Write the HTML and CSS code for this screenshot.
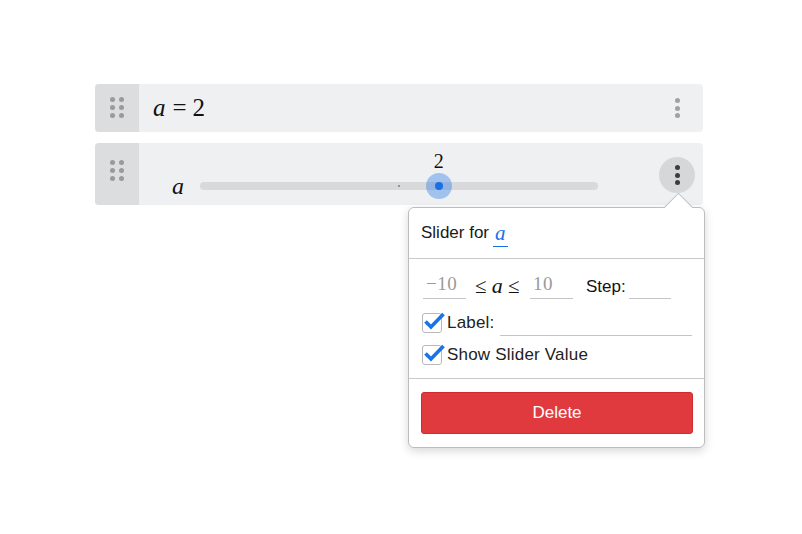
FILE: index.html
```html
<!DOCTYPE html>
<html>
<head>
<meta charset="utf-8">
<link rel="stylesheet" href="styles.css">
</head>
<body>
<div class="list">
  <div class="row row-expr">
    <div class="handle"><div class="grip"><span></span><span></span><span></span><span></span><span></span><span></span></div></div>
    <div class="expr"><span class="math"><i>a</i><span class="op">=</span>2</span></div>
    <div class="kebab"><span></span><span></span><span></span></div>
  </div>
  <div class="row row-slider">
    <div class="handle handle-top"><div class="grip"><span></span><span></span><span></span><span></span><span></span><span></span></div></div>
    <div class="slider-body">
      <i class="var">a</i>
      <div class="track">
        <span class="tick"></span>
        <span class="thumb" style="left:60%"><span class="val">2</span><span class="core"></span></span>
      </div>
    </div>
    <div class="kebab kebab-active"><span></span><span></span><span></span></div>
  </div>

  <div class="popover">
    <span class="arrow"></span>
    <div class="pop-head">Slider for <i class="blue-var">a</i></div>
    <div class="pop-body">
      <div class="range-row">
        <span class="field f-min">−10</span>
        <span class="ineq">≤ <i>a</i> ≤</span>
        <span class="field f-max">10</span>
        <span class="step-label">Step:</span>
        <span class="field f-step"></span>
      </div>
      <div class="check-row">
        <span class="checkbox"><svg viewBox="0 0 24 20" width="24" height="20"><path d="M3.5 10.5 L9 16 L21.5 3" fill="none" stroke="#1a73e8" stroke-width="3.6" stroke-linejoin="miter" stroke-linecap="butt"/></svg></span>
        <span class="check-label">Label:</span>
        <span class="field f-label"></span>
      </div>
      <div class="check-row check-row-2">
        <span class="checkbox"><svg viewBox="0 0 24 20" width="24" height="20"><path d="M3.5 10.5 L9 16 L21.5 3" fill="none" stroke="#1a73e8" stroke-width="3.6" stroke-linejoin="miter" stroke-linecap="butt"/></svg></span>
        <span class="check-label">Show Slider Value</span>
      </div>
    </div>
    <div class="pop-foot">
      <button class="delete">Delete</button>
    </div>
  </div>
</div>
</body>
</html>
```

FILE: styles.css
```css
* { box-sizing: border-box; }
html, body { margin: 0; padding: 0; background: #ffffff; }
body {
  font-family: "Liberation Sans", Arial, sans-serif;
  color: #222;
  width: 802px;
  height: 534px;
  overflow: hidden;
}

.list {
  position: relative;
  margin: 84px 0 0 95px;
  width: 608px;
}

.row {
  display: flex;
  background: #eff0f2;
  border-radius: 4px;
  overflow: visible;
}
.row-expr { height: 48px; }
.row-slider { height: 62px; margin-top: 11px; }

.handle {
  width: 44px;
  flex: 0 0 44px;
  background: #dcdddf;
  border-radius: 4px 0 0 4px;
  display: flex;
  justify-content: center;
  align-items: center;
}
.handle-top { align-items: flex-start; padding-top: 18px; }

.grip {
  display: grid;
  grid-template-columns: 5px 5px;
  grid-auto-rows: 5px;
  column-gap: 4px;
  row-gap: 3px;
  margin-top: -1px;
}
.grip span {
  width: 5px;
  height: 5px;
  border-radius: 50%;
  background: #999a9c;
}

.expr {
  flex: 1;
  display: flex;
  align-items: center;
  padding-left: 14px;
}
.math {
  font-family: "Liberation Serif", "Times New Roman", serif;
  font-size: 25px;
  color: #111;
}
.math i { font-style: italic; }
.math .op { margin: 0 6px 0 7px; }

.kebab {
  width: 36px;
  height: 36px;
  margin: 6px 8px 0 0;
  border-radius: 50%;
  display: flex;
  flex-direction: column;
  align-items: center;
  justify-content: center;
  gap: 2.5px;
}
.kebab span {
  width: 5px;
  height: 5px;
  border-radius: 50%;
  background: #a0a1a3;
}
.kebab-active {
  background: #d6d7d9;
  margin-top: 14px;
}
.kebab-active span { background: #3d3d3f; }

.slider-body {
  flex: 1;
  display: flex;
  align-items: center;
  padding-top: 24px;
  padding-left: 33px;
}
.var {
  font-family: "Liberation Serif", "Times New Roman", serif;
  font-style: italic;
  font-size: 24px;
  color: #111;
  width: 28px;
}
.track {
  position: relative;
  width: 398px;
  height: 8px;
  border-radius: 4px;
  background: #d9d9db;
}
.tick {
  position: absolute;
  left: 50%;
  top: 3px;
  width: 2px;
  height: 2px;
  margin-left: -1px;
  background: #7c7c7c;
  border-radius: 50%;
}
.thumb {
  position: absolute;
  top: 50%;
  width: 26px;
  height: 26px;
  margin: -13px 0 0 -13px;
  border-radius: 50%;
  background: rgba(36, 118, 232, 0.38);
  display: flex;
  align-items: center;
  justify-content: center;
}
.core {
  width: 8px;
  height: 8px;
  border-radius: 50%;
  background: #1a6fe6;
}
.val {
  position: absolute;
  left: 50%;
  bottom: 28px;
  transform: translateX(-50%);
  font-family: "Liberation Serif", "Times New Roman", serif;
  font-size: 20px;
  color: #111;
  line-height: 1;
}

/* popover */
.popover {
  position: absolute;
  left: 313px;
  top: 123px;
  width: 297px;
  height: 241px;
  background: #fff;
  border: 1px solid #bdbdbf;
  border-radius: 6px;
  box-shadow: 0 3px 10px rgba(0, 0, 0, 0.16);
  display: flex;
  flex-direction: column;
}
.arrow {
  position: absolute;
  left: 259px;
  top: -11px;
  width: 21px;
  height: 21px;
  background: #fff;
  border-top: 1px solid #bdbdbf;
  border-left: 1px solid #bdbdbf;
  transform: rotate(45deg);
}
.pop-head {
  position: relative;
  height: 51px;
  border-bottom: 1px solid #c9c9cb;
  padding-left: 12px;
  display: flex;
  align-items: center;
  font-size: 17px;
  color: #1a1a1a;
}
.blue-var {
  font-family: "Liberation Serif", "Times New Roman", serif;
  font-style: italic;
  font-size: 21px;
  color: #1a6fe6;
  margin-left: 4px;
  padding: 0 2px 2px;
  border-bottom: 1.5px solid #1a6fe6;
  line-height: 1;
  margin-top: 4px;
}

.pop-body {
  height: 120px;
  border-bottom: 1px solid #c9c9cb;
  padding: 13px 12px 0 13px;
  display: flex;
  flex-direction: column;
}
.range-row {
  display: flex;
  align-items: flex-end;
  height: 27px;
}
.field {
  display: block;
  height: 27px;
  border-bottom: 1px solid #c5c5c7;
  font-family: "Liberation Serif", "Times New Roman", serif;
  font-size: 19px;
  color: #9a9a9a;
  padding-left: 3px;
  line-height: 24px;
  letter-spacing: 0.5px;
}
.f-min { width: 43px; margin-left: 1px; }
.ineq {
  font-family: "Liberation Serif", "Times New Roman", serif;
  font-size: 21px;
  color: #111;
  margin-left: 9px;
  width: 55px;
  line-height: 26px;
}
.ineq i { font-size: 22px; }
.f-max { width: 43px; }
.step-label {
  font-size: 17px;
  color: #111;
  margin-left: 13px;
  width: 43px;
  line-height: 24px;
}
.f-step { width: 42px; }

.check-row {
  display: flex;
  align-items: center;
  height: 23px;
  margin-top: 14px;
  position: relative;
}
.check-row-2 { margin-top: 9px; height: 20px; }
.checkbox {
  position: relative;
  width: 20px;
  height: 20px;
  flex: 0 0 20px;
  border: 1px solid #b9b9bb;
  border-radius: 3px;
  background: #fff;
  align-self: flex-start;
}
.checkbox svg {
  position: absolute;
  left: -1px;
  top: -3px;
}
.check-label {
  font-size: 17px;
  color: #222;
  margin-left: 5px;
  align-self: flex-start;
  line-height: 20px;
  letter-spacing: 0.2px;
}
.f-label {
  height: 23px;
  width: 192px;
  margin-left: auto;
  margin-right: 0;
}

.pop-foot {
  padding: 13px 12px 12px 12px;
}
.delete {
  display: block;
  width: 272px;
  height: 42px;
  background: #e03a3f;
  border: 1px solid #d02b31;
  border-radius: 3px;
  color: #fff;
  font-family: "Liberation Sans", Arial, sans-serif;
  font-size: 17px;
  padding: 0;
}
```
